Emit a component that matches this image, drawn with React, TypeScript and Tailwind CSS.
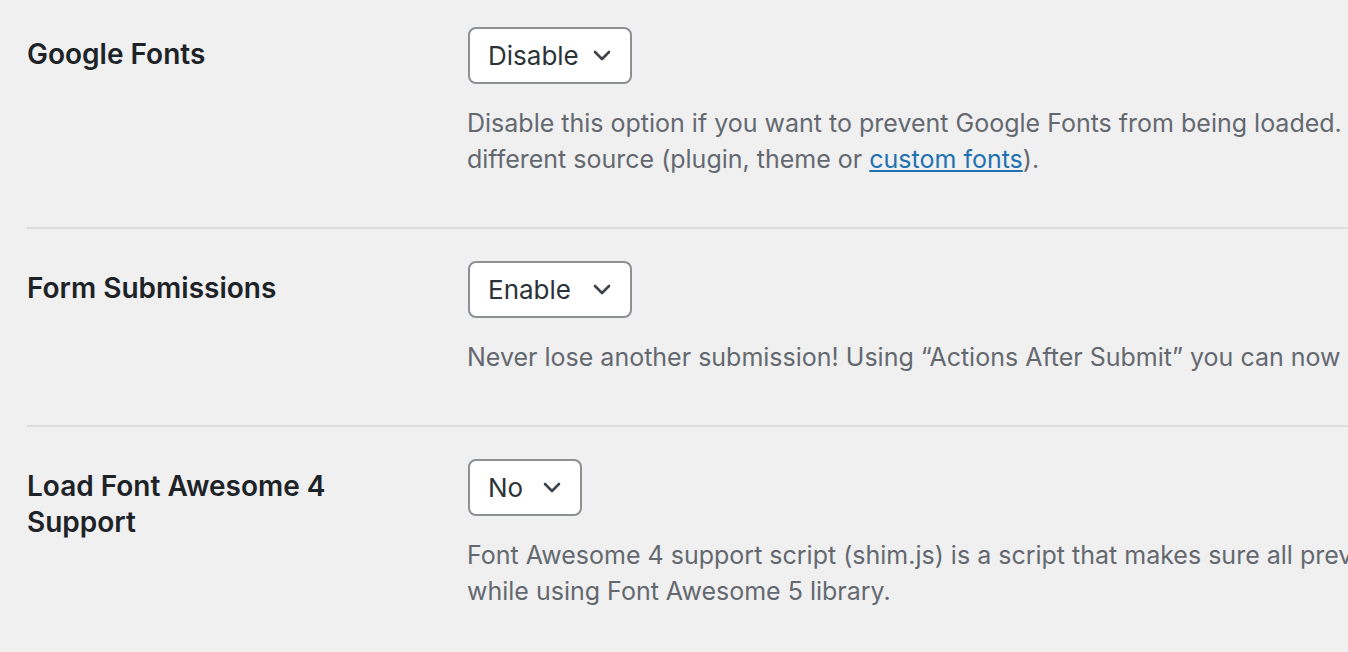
import type { ReactNode } from "react"

function Chevron() {
	return (
		<svg width="18" height="11" viewBox="0 0 18 11" fill="none" className="ml-auto">
			<path d="M2 2 L9 9 L16 2" stroke="#3c434a" strokeWidth="2.6" strokeLinecap="round" strokeLinejoin="round" />
		</svg>
	)
}

function Select({ value, width }: { value: string; width: string }) {
	return (
		<div className={`flex items-center h-[57px] ${width} pl-[18px] pr-[19px] bg-white border-2 border-[#8c8f94] rounded-[8px] text-[26px] text-[#2c3338]`}>
			<span>{value}</span>
			<Chevron />
		</div>
	)
}

function Row({ label, value, width, first, last, children }: {
	label: ReactNode
	value: string
	width: string
	first?: boolean
	last?: boolean
	children: ReactNode
}) {
	return (
		<div className={`flex ${first ? "pt-[27px]" : "pt-[32px]"} pb-[50px] ${last ? "" : "border-b-2 border-[#dcdcde]"}`}>
			<div className="w-[441px] shrink-0 pt-[9px] text-[28px] leading-[36px] font-semibold text-[#1d2327]">
				{label}
			</div>
			<div className="flex flex-col items-start whitespace-nowrap">
				<Select value={value} width={width} />
				<p className="mt-[21px] -ml-px text-[25px] leading-[36px] text-[#646970]">{children}</p>
			</div>
		</div>
	)
}

export default function App() {
	return (
		<div className="min-h-screen w-full overflow-hidden bg-[#f0f0f1] pl-[27px]" style={{ fontFamily: "Inter, 'Noto Sans', sans-serif" }}>
			<Row label="Google Fonts" value="Disable" width="w-[164px]" first>
				Disable this option if you want to prevent Google Fonts from being loaded. This setting is recommended when you are loading Google Fonts from a
				<br />
				different source (plugin, theme or <a href="#" className="text-[#2271b1] underline">custom fonts</a>).
			</Row>
			<Row label="Form Submissions" value="Enable" width="w-[164px]">
				Never lose another submission! Using “Actions After Submit” you can now choose to store all submissions in an internal database table.
			</Row>
			<Row label={<>Load Font Awesome 4<br />Support</>} value="No" width="w-[114px]" last>
				Font Awesome 4 support script (shim.js) is a script that makes sure all previously selected Font Awesome 4 icons are displayed correctly
				<br />
				while using Font Awesome 5 library.
			</Row>
		</div>
	)
}
